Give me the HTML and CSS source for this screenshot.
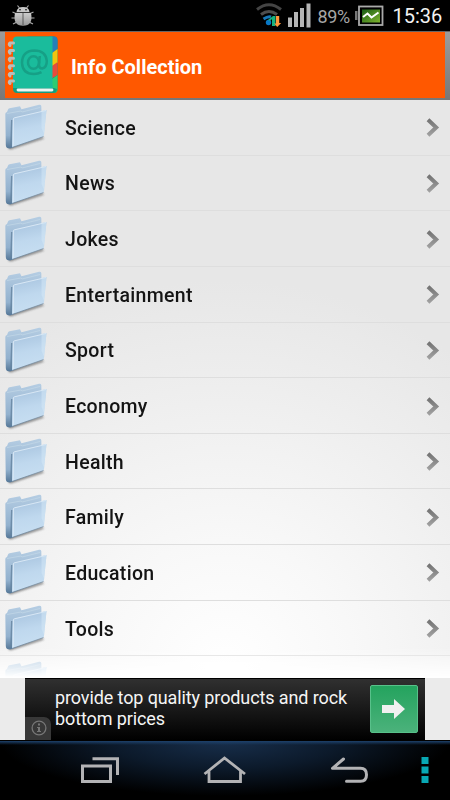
FILE: index.html
```html
<!DOCTYPE html>
<html lang="en">
<head>
<meta charset="utf-8">
<title>Info Collection</title>
<link rel="stylesheet" href="styles.css">
</head>
<body>
<svg class="defs" width="0" height="0" aria-hidden="true">
  <defs>
    <linearGradient id="front" x1=".3" y1="0" x2=".5" y2="1"><stop offset="0" stop-color="#a8c4df"/><stop offset=".5" stop-color="#bfd8ee"/><stop offset="1" stop-color="#c8dff2"/></linearGradient>
    <linearGradient id="back" x1="0" y1="0" x2="0" y2="1"><stop offset="0" stop-color="#b5cde3"/><stop offset=".7" stop-color="#92b1ce"/><stop offset="1" stop-color="#557797"/></linearGradient>
    <linearGradient id="chev" x1="0" y1="0" x2="0" y2="1"><stop offset="0" stop-color="#747474"/><stop offset="1" stop-color="#a0a0a0"/></linearGradient>
    <linearGradient id="bug" x1="0" y1="0" x2="0" y2="1"><stop offset="0" stop-color="#ccc"/><stop offset="1" stop-color="#989898"/></linearGradient>
    <linearGradient id="batt" x1="0" y1="0" x2="1" y2="1"><stop offset="0" stop-color="#195c16"/><stop offset="1" stop-color="#7fb52d"/></linearGradient>
    <filter id="soft" x="-20%" y="-50%" width="140%" height="200%"><feGaussianBlur stdDeviation=".8"/></filter>
  </defs>
  <symbol id="folder" viewBox="0 0 48 56">
    <path d="M8 48 L42 38 L44 39.500 L10 50.500z" fill="#333" opacity=".6" filter="url(#soft)"/>
    <path d="M5.300 15 Q5.300 13.500 7 13 L8 10.500 Q8.200 9.500 9.500 9.200 L20 7.300 L21.500 10.300 L39 5.800 Q41 5.500 41.300 7 L42 37 L10 49.500 Q5.800 49.500 5.800 46z" fill="url(#back)"/>
    <path d="M7 14.500 L21 12 L22 13 L40 8.500" fill="none" stroke="#cadcea" stroke-width=".8" opacity=".7"/>
    <path d="M11.800 21 L11 47" stroke="#64839f" stroke-width="1.600" opacity=".8"/>
    <path d="M12.700 20.500 Q12.900 18.500 14.500 18.200 L46.500 11 L44 36 Q43.900 37.300 43 37.700 L12 48.500z" fill="url(#front)"/>
    <path d="M13.200 47 L13.400 20 Q13.400 19 14.500 18.800 L46 11.500" fill="none" stroke="#dceaf6" stroke-width=".9"/>
    <path d="M41.500 12.300 L46.500 11 L44 35 L41.500 29z" fill="#d3e7f5" opacity=".55"/>
    <path d="M12 48.500 L43.500 37.600" stroke="#6d8297" stroke-width=".7"/>
  </symbol>
  <symbol id="chevron" viewBox="0 0 18 24">
    <path d="M4 3.700 L12.200 11.500 L4 19.200" fill="none" stroke="url(#chev)" stroke-width="4"/>
  </symbol>
</svg>

<div class="status">
  <svg class="bug" width="26" height="24" viewBox="0 0 26 24">
    <path d="M7 10L2.500 8M7 14H1.500M7 18L3 20M19 10l4.500-2M19 14h5.500M19 18l4 2M9.500 4L7.500 1.500M16.500 4l2-2.500" stroke="#aaa" stroke-width="1.200"/>
    <path d="M6.500 8Q7 3 13 3T19.500 8z" fill="#c6c6c6"/>
    <path d="M5 9H21Q23.500 21.700 13 21.700T5 9z" fill="url(#bug)"/>
    <path d="M5.500 8.500H20.500M13 9v12" stroke="#444" stroke-width=".8"/>
    <circle cx="10" cy="5.700" r=".8"/><circle cx="16" cy="5.700" r=".8"/>
  </svg>
  <svg class="signals" width="57" height="28" viewBox="0 0 57 28">
    <g fill="none">
      <path d="M1 8.500Q13-1 25 8.500" stroke="#444" stroke-width="3"/>
      <path d="M5 13.500Q13 7.500 21 13.500" stroke="#4d4d4d" stroke-width="3"/>
      <path d="M7.500 18Q12 15 15 16" stroke="#1677b8" stroke-width="3"/>
    </g>
    <circle cx="12.500" cy="21.500" r="2.700" fill="#0877c5"/>
    <path d="M12 19l5-4h2.500v10h-3.500v-7l-2 2z" fill="#17b27e"/>
    <path d="M20 15h3.200v7h2l-4 4-3-3.500H20z" fill="#ff963b"/>
    <path d="M32 16.500h4V26h-4zM38 11h4v15h-4zM44 7h4v19h-4zM50.500 2.500h4V26.500h-4z" fill="#b5b5b5"/>
  </svg>
  <span class="percent">89%</span>
  <svg class="battery" width="29" height="22" viewBox="0 0 29 22">
    <path d="M0 6h2.500v9H0z" fill="#777"/>
    <rect x="4" y="1.500" width="23.500" height="18.500" fill="#000" stroke="#aaa" stroke-width="1.800"/>
    <rect x="7" y="4.500" width="18" height="13" fill="url(#batt)"/>
    <path d="M8 12L12.500 8.500l4 4L23.500 7.500" fill="none" stroke="#fff" stroke-width="2"/>
  </svg>
  <span class="clock">15:36</span>
</div>

<header class="header">
  <div class="banner">
    <svg class="book" width="54" height="66" viewBox="0 0 54 66">
      <rect x="20" y="4.500" width="32.500" height="56.500" rx="4" fill="#168f77"/>
      <path d="M44 4.500h5q3.500 0 3.500 4V17l-5 4h-4z" fill="#277fba"/>
      <path d="M47 21l5.500-4v14l-5 3h-1z" fill="#f1c40f"/>
      <path d="M47 34l5.500-4v13l-5 3h-1z" fill="#e74c3c"/>
      <path d="M47 47l5.500-4v14q0 4-4 4H46z" fill="#2ecc71"/>
      <path d="M12 4.500h35.500v54H12q-4 0-4-4v-46q0-4 4-4z" fill="#1abc9c"/>
      <path d="M8 54v2.500q0 4.500 4 4.500h36q3.500 0 4-4l-3-1z" fill="#149b80"/>
      <path d="M8 53h39.500v3H8z" fill="#1abc9c"/>
      <path d="M13 58h34" stroke="#edf5f2" stroke-width="2.800" stroke-linecap="round"/>
      <g fill="none" stroke="#b9bdbc" stroke-width="3" stroke-linecap="round"><path d="M8.500 11H5Q3.500 12 5 13.500"/><path d="M8.500 18.600H5q-1.500 1 0 2.500"/><path d="M8.500 26.200H5q-1.500 1 0 2.500"/><path d="M8.500 33.800H5q-1.500 1 0 2.500"/><path d="M8.500 41.400H5q-1.500 1 0 2.500"/><path d="M8.500 49H5q-1.500 1 0 2.500"/></g>
      <g fill="none" stroke="#16a086" stroke-width="2.500"><ellipse cx="28.500" cy="30.500" rx="5.500" ry="6.300"/><path d="M34.800 24L34 32.500q0 4 3.300 4 4.500-1 4.500-7.500-1-10.500-12.500-10.500Q17 19 17 31 17.500 42 29 42q4 0 7.500-1.800"/></g>
    </svg>
    <h1 class="title">Info Collection</h1>
  </div>
</header>

<div class="list-frame">
<main class="list">
  <div class="row"><svg class="folder"><use href="#folder"/></svg><span class="label">Science</span><svg class="chevron"><use href="#chevron"/></svg></div>
  <div class="row"><svg class="folder"><use href="#folder"/></svg><span class="label">News</span><svg class="chevron"><use href="#chevron"/></svg></div>
  <div class="row"><svg class="folder"><use href="#folder"/></svg><span class="label">Jokes</span><svg class="chevron"><use href="#chevron"/></svg></div>
  <div class="row"><svg class="folder"><use href="#folder"/></svg><span class="label">Entertainment</span><svg class="chevron"><use href="#chevron"/></svg></div>
  <div class="row"><svg class="folder"><use href="#folder"/></svg><span class="label">Sport</span><svg class="chevron"><use href="#chevron"/></svg></div>
  <div class="row"><svg class="folder"><use href="#folder"/></svg><span class="label">Economy</span><svg class="chevron"><use href="#chevron"/></svg></div>
  <div class="row"><svg class="folder"><use href="#folder"/></svg><span class="label">Health</span><svg class="chevron"><use href="#chevron"/></svg></div>
  <div class="row"><svg class="folder"><use href="#folder"/></svg><span class="label">Family</span><svg class="chevron"><use href="#chevron"/></svg></div>
  <div class="row"><svg class="folder"><use href="#folder"/></svg><span class="label">Education</span><svg class="chevron"><use href="#chevron"/></svg></div>
  <div class="row"><svg class="folder"><use href="#folder"/></svg><span class="label">Tools</span><svg class="chevron"><use href="#chevron"/></svg></div>
  <div class="row"><svg class="folder"><use href="#folder"/></svg></div>
</main>
</div>

<section class="ad-strip">
  <div class="ad">
    <span class="info"><svg width="16" height="16" viewBox="0 0 16 16"><circle cx="8" cy="8" r="6.900" fill="none" stroke="#777" stroke-width="1.300"/><path d="M7 3.500h2v2H7zM6 7h3v4h1v1H6v-1h1V8H6z" fill="#777"/></svg></span>
    <p class="ad-text">provide top quality products and rock<br>bottom prices</p>
    <span class="go"><svg width="24" height="20" viewBox="0 0 24 20"><path d="M0 6h12V0l11 10-11 10v-6H0z" fill="#f0f0f0"/></svg></span>
  </div>
</section>

<nav class="nav">
  <svg width="450" height="60" viewBox="0 0 450 60">
    <g fill="none" stroke="#b3b3b5" stroke-width="3">
      <path d="M82.500 26H110.500V41.500H82.500zM92.500 18.800H117.500V35"/>
      <path d="M204.500 34L224.500 18 245 34M209 31V41.500H240.500V31" stroke-width="2.800"/>
      <path d="M343.500 19L332.500 28.300H360.500Q366.500 28.300 366.500 34.800T360.500 41.300H346.500" stroke-width="3" stroke-linecap="round" stroke-linejoin="round"/>
    </g>
    <path d="M421.500 17h7v7h-7zM421.500 26.500h7v7h-7zM421.500 36h7v7h-7z" fill="#08a8b4"/>
  </svg>
</nav>
</body>
</html>
```
FILE: styles.css
```css
* { box-sizing: border-box; }
html { background: #000; }
body {
  margin: 0;
  width: 450px;
  height: 800px;
  overflow: hidden;
  display: flex;
  flex-direction: column;
  background: #000;
  font-family: Roboto, "Noto Sans", sans-serif;
}
.defs { position: absolute; }
.status {
  height: 31px;
  flex: none;
  display: flex;
  align-items: flex-start;
  background: #000;
}
.bug { margin: 4px 0 0 10px; }
.signals { margin: 1px 0 0 220px; }
.percent {
  width: 33px;
  margin: 6px 0 0 4.5px;
  font-size: 18px;
  line-height: 21px;
  letter-spacing: -.4px;
  color: #a6a6a6;
}
.battery { margin: 5px 0 0 4.5px; }
.clock {
  margin: 4px 0 0 8.5px;
  font-size: 20px;
  line-height: 24px;
  color: #f2f2f2;
}
.header {
  height: 69px;
  flex: none;
  padding: 0 5px 2px;
  background: linear-gradient(#9c9c9c, #777);
  border-top: 1px solid #666;
}
.banner {
  height: 66px;
  display: flex;
  align-items: center;
  background: #ff5800;
}
.book { width: 54px; height: 66px; flex: none; }
.title {
  margin: 4px 0 0 12px;
  font-size: 20px;
  line-height: 24px;
  font-weight: 700;
  color: #fff;
}
.list-frame { height: 578px; flex: none; background: #fff; }
.list {
  height: 578px;
  overflow: hidden;
  background: radial-gradient(circle at 225px 570px, #fff 0, #f8f8f8 130px, #e7e7e7 390px);
  -webkit-mask-image: linear-gradient(#000 548px, transparent 577px);
  mask-image: linear-gradient(#000 548px, transparent 577px);
}
.row {
  height: 55.65px;
  display: flex;
  align-items: center;
  border-bottom: 1px solid #dedede;
}
.folder { width: 48px; height: 56px; flex: none; }
.label {
  flex: 1;
  margin: 3px 0 0 17px;
  font-size: 19.5px;
  line-height: 24px;
  font-weight: 500;
  letter-spacing: .3px;
  color: #141414;
}
.chevron { width: 18px; height: 24px; margin: 2px 8px 0 0; }
.ad-strip {
  height: 62px;
  flex: none;
  padding: 0 25px;
  background: #ebebeb;
}
.ad {
  position: relative;
  height: 62px;
  display: flex;
  justify-content: space-between;
  padding: 6px 7px 0 30px;
  background: linear-gradient(#303030, #000);
  border-top: 1px solid #000;
}
.info {
  position: absolute;
  left: 0;
  bottom: 0;
  width: 26px;
  height: 23px;
  padding: 3px 0 0 6px;
  background: #383838;
  border-top-right-radius: 7px;
}
.info svg { display: block; }
.ad-text {
  margin: 2px 0 0;
  font-size: 18px;
  line-height: 21px;
  letter-spacing: -.11px;
  white-space: nowrap;
  color: #f5f5f5;
}
.go {
  width: 48px;
  height: 48px;
  display: flex;
  align-items: center;
  justify-content: center;
  border: 1px solid #58c18a;
  border-radius: 2px;
  background: linear-gradient(#24a35e, #4bb27b);
}
.nav {
  height: 60px;
  flex: none;
  border-top: 1px solid #000;
  background: linear-gradient(#1d416b 0, #1d416b00 4px), radial-gradient(ellipse 225px 55px at 50% 0, #182f4c, #0c1a2b 50%, #000 100%);
}
.nav svg { display: block; margin-top: -1px; }
```
